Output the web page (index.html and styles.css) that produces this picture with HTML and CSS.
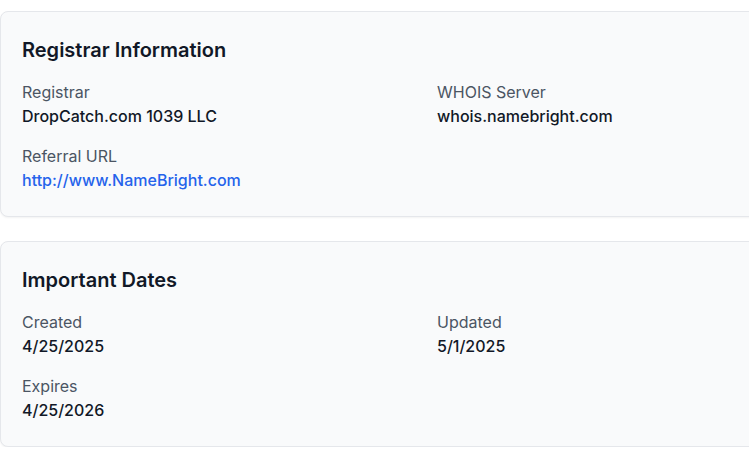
FILE: index.html
```html
<!DOCTYPE html>
<html lang="en">
<head>
    <meta charset="UTF-8">
    <meta name="viewport" content="width=device-width, initial-scale=1.0">
    <title>Domain WHOIS</title>
    <link rel="stylesheet" href="styles.css">
</head>
<body>
    <div class="page">
        <section class="card">
            <h2 class="card-title">Registrar Information</h2>
            <div class="fields">
                <div class="field">
                    <div class="label">Registrar</div>
                    <div class="value">DropCatch.com 1039 LLC</div>
                </div>
                <div class="field">
                    <div class="label">WHOIS Server</div>
                    <div class="value">whois.namebright.com</div>
                </div>
                <div class="field">
                    <div class="label">Referral URL</div>
                    <a class="value link" href="#">http://www.NameBright.com</a>
                </div>
            </div>
        </section>

        <section class="card">
            <h2 class="card-title">Important Dates</h2>
            <div class="fields">
                <div class="field">
                    <div class="label">Created</div>
                    <div class="value">4/25/2025</div>
                </div>
                <div class="field">
                    <div class="label">Updated</div>
                    <div class="value">5/1/2025</div>
                </div>
                <div class="field">
                    <div class="label">Expires</div>
                    <div class="value">4/25/2026</div>
                </div>
            </div>
        </section>
    </div>
</body>
</html>
```

FILE: styles.css
```css
body {
    margin: 0;
    background: #ffffff;
    font-family: Inter, "Noto Sans", Arial, sans-serif;
    overflow: hidden;
}

.page {
    width: 850px;
    padding-top: 11px;
    display: flex;
    flex-direction: column;
    gap: 24px;
}

.card {
    background: #f9fafb;
    border: 1px solid #e5e7eb;
    border-radius: 8px;
    box-shadow: 0 1px 2px rgba(0, 0, 0, 0.05);
    padding: 24px 21px;
}

.card-title {
    margin: 0 0 16px;
    font-size: 20px;
    line-height: 28px;
    font-weight: 600;
    color: #111827;
}

.fields {
    display: grid;
    grid-template-columns: 391px 1fr;
    column-gap: 24px;
    row-gap: 16px;
}

.field {
    display: flex;
    flex-direction: column;
}

.label {
    font-size: 16px;
    line-height: 24px;
    color: #4b5563;
}

.value {
    font-size: 16px;
    line-height: 24px;
    font-weight: 500;
    color: #111827;
}

.link {
    color: #2563eb;
    text-decoration: none;
}
```
